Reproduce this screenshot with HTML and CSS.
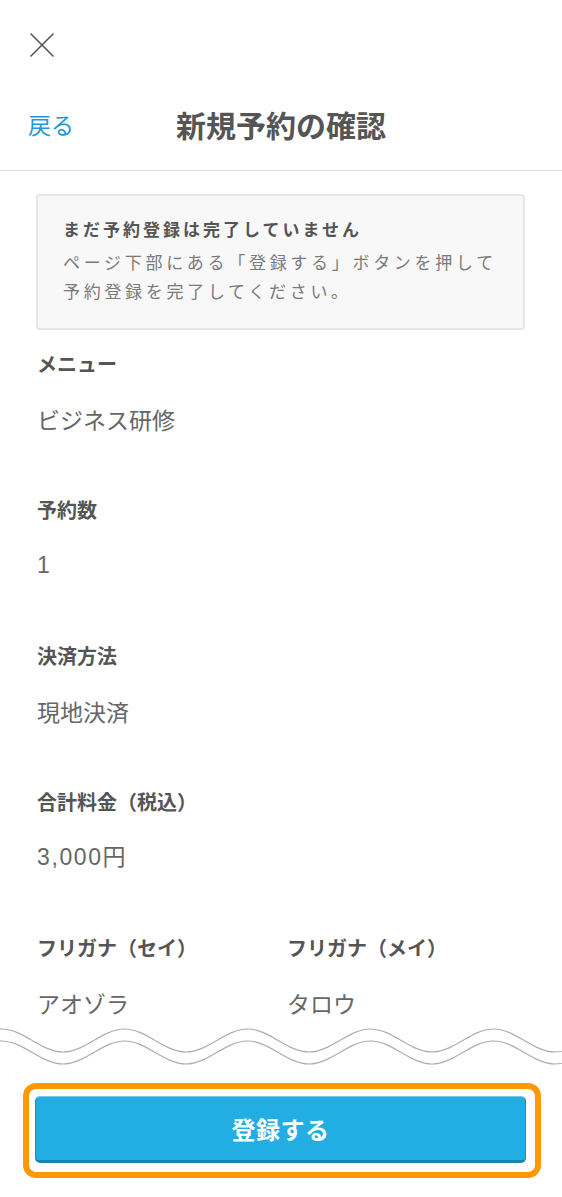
FILE: index.html
```html
<!DOCTYPE html>
<html lang="ja">
<head>
<meta charset="utf-8">
<title>新規予約の確認</title>
<link rel="stylesheet" href="styles.css">
</head>
<body>
<div class="page">
  <div class="close-row">
    <svg class="close-icon" width="24" height="24" viewBox="0 0 24 24" aria-hidden="true">
      <path d="M1 1 L23 23 M23 1 L1 23" fill="none" stroke="#555" stroke-width="1.6" stroke-linecap="round"/>
    </svg>
  </div>
  <header class="nav">
    <a class="back">戻る</a>
    <h1 class="title">新規予約の確認</h1>
    <span></span>
  </header>

  <main class="content">
    <div class="notice">
      <p class="notice-head">まだ予約登録は完了していません</p>
      <p class="notice-body">ページ下部にある「登録する」ボタンを押して<br>予約登録を完了してください。</p>
    </div>

    <section class="field">
      <div class="label">メニュー</div>
      <div class="value">ビジネス研修</div>
    </section>
    <section class="field">
      <div class="label">予約数</div>
      <div class="value num">1</div>
    </section>
    <section class="field">
      <div class="label">決済方法</div>
      <div class="value">現地決済</div>
    </section>
    <section class="field">
      <div class="label">合計料金（税込）</div>
      <div class="value num">3,000円</div>
    </section>
    <section class="field field-pair">
      <div class="col">
        <div class="label">フリガナ（セイ）</div>
        <div class="value">アオゾラ</div>
      </div>
      <div class="col">
        <div class="label">フリガナ（メイ）</div>
        <div class="value">タロウ</div>
      </div>
    </section>
  </main>

  <svg class="wave" width="562" height="42" viewBox="0 0 562 42" aria-hidden="true">
    <defs>
      <path id="wv" d="M-121.5 4 C-99.4 4 -82.1 27 -60 27 S-20.6 4 1.5 4 S40.9 27 63 27 S102.4 4 124.5 4 S163.9 27 186 27 S225.4 4 247.5 4 S286.9 27 309 27 S348.4 4 370.5 4 S409.9 27 432 27 S471.4 4 493.5 4 S532.9 27 555 27 S594.4 4 616.5 4" fill="none" stroke="#aeaeae" stroke-width="1.2"/>
    </defs>
    <use href="#wv"/>
    <use href="#wv" transform="translate(0 12)"/>
  </svg>

  <div class="submit-wrap">
    <button class="submit" type="button">登録する</button>
    <span class="highlight"></span>
  </div>
</div>
</body>
</html>
```

FILE: styles.css
```css
* { box-sizing: border-box; }

html, body {
  margin: 0;
  padding: 0;
  background: #fff;
}

body {
  font-family: "Noto Sans CJK JP", "Noto Sans", sans-serif;
  color: #555;
}

.page {
  width: 562px;
  min-height: 1197px;
  overflow: hidden;
}

.close-row {
  height: 86px;
  padding: 33px 0 0 30px;
}

.close-icon {
  display: block;
}

.nav {
  height: 85px;
  padding-bottom: 8px;
  display: grid;
  grid-template-columns: 1fr auto 1fr;
  align-items: center;
  border-bottom: 1px solid #dedede;
}

.back {
  padding-left: 28px;
  font-size: 23px;
  line-height: 30px;
  color: #1f9ad4;
}

.title {
  margin: 0;
  font-size: 30px;
  line-height: 36px;
  font-weight: 700;
  color: #555;
}

.content {
  padding: 23px 37px 0 36px;
}

.notice {
  background: #f8f8f8;
  border: 2px solid #e6e6e6;
  border-radius: 4px;
  padding: 18px 20px 23px 25px;
}

.notice p {
  margin: 0;
}

.notice-head {
  font-size: 17px;
  line-height: 30px;
  font-weight: 700;
  letter-spacing: 3px;
  color: #555;
}

.notice-body {
  margin-top: 3px !important;
  font-size: 17px;
  line-height: 29px;
  letter-spacing: 3.7px;
  color: #7a7a7a;
}

.field {
  padding-top: 19px;
  padding-bottom: 42px;
}

.label {
  font-size: 20px;
  line-height: 30px;
  font-weight: 700;
  color: #555;
  padding-left: 1px;
}

.value {
  margin-top: 25px;
  font-size: 23px;
  line-height: 30px;
  color: #666;
  padding-left: 1px;
}

.value.num {
  font-family: "Liberation Sans", "Noto Sans CJK JP", sans-serif;
  letter-spacing: 1.6px;
}

.field-pair {
  display: grid;
  grid-template-columns: 250px 1fr;
  padding-bottom: 0;
}

.wave {
  display: block;
  margin-top: 7px;
}

.submit-wrap {
  position: relative;
  margin: 29px 36px 0 35px;
}

.submit {
  display: block;
  width: 100%;
  height: 67px;
  border: 1px solid #1c8fbf;
  border-top-color: #7cc8e6;
  border-bottom: 3px solid #1984b2;
  border-radius: 5px;
  background: #22aee3;
  color: #fff;
  font-family: "Noto Sans CJK JP", "Noto Sans", sans-serif;
  font-size: 24px;
  font-weight: 700;
  letter-spacing: 0.5px;
  padding: 0;
}

.highlight {
  position: absolute;
  left: -12px;
  right: -15px;
  top: -13px;
  bottom: -15px;
  border: 6px solid #ff9800;
  border-radius: 13px;
  pointer-events: none;
}
```
